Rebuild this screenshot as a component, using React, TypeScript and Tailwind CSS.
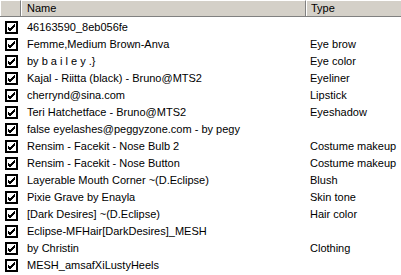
import React from 'react';

const rows: [string, string][] = [
  ['46163590_8eb056fe', ''],
  ['Femme,Medium Brown-Anva', 'Eye brow'],
  ['by b a i l e y .}', 'Eye color'],
  ['Kajal - Riitta (black) - Bruno@MTS2', 'Eyeliner'],
  ['cherrynd@sina.com', 'Lipstick'],
  ['Teri Hatchetface - Bruno@MTS2', 'Eyeshadow'],
  ['false eyelashes@peggyzone.com - by pegy', ''],
  ['Rensim - Facekit - Nose Bulb 2', 'Costume makeup'],
  ['Rensim - Facekit - Nose Button', 'Costume makeup'],
  ['Layerable Mouth Corner ~(D.Eclipse)', 'Blush'],
  ['Pixie Grave by Enayla', 'Skin tone'],
  ['[Dark Desires] ~(D.Eclipse)', 'Hair color'],
  ['Eclipse-MFHair[DarkDesires]_MESH', ''],
  ['by Christin', 'Clothing'],
  ['MESH_amsafXiLustyHeels', ''],
];

const CheckBox = () => (
  <div className="w-[13px] h-[13px] border-2 border-black bg-white flex items-center justify-center">
    <svg width="9" height="9" viewBox="0 0 9 9">
      <path d="M1 4 L3 6 L8 1 M1 5 L3 7 L8 2 M1 6 L3 8 L8 3" stroke="#000" strokeWidth="1" fill="none" shapeRendering="crispEdges" />
    </svg>
  </div>
);

export default function App() {
  return (
    <div
      className="w-[401px] h-[275px] bg-white overflow-hidden text-[11px] text-black"
      style={{ fontFamily: '"Liberation Sans", Arial, sans-serif' }}
    >
      {/* header */}
      <div className="flex h-[17px] bg-[#d4d0c8] border-b border-[#808080]">
        <div className="w-[21px] border-t border-l border-white border-r border-r-[#808080]" />
        <div className="w-[285px] border-t border-l border-white border-r border-r-[#808080] pl-[5px] leading-[15px]">Name</div>
        <div className="flex-1 border-t border-l border-white pl-[4px] leading-[15px]">Type</div>
      </div>
      {/* rows */}
      <div className="pt-[2px]">
        {rows.map(([name, type], i) => (
          <div key={i} className="flex h-[17px] items-center">
            <div className="w-[21px] pl-[5px] flex items-center">
              <CheckBox />
            </div>
            <div className="w-[285px] pl-[6px] whitespace-nowrap overflow-hidden">{name}</div>
            <div className="flex-1 pl-[4px] whitespace-nowrap">{type}</div>
          </div>
        ))}
      </div>
    </div>
  );
}
